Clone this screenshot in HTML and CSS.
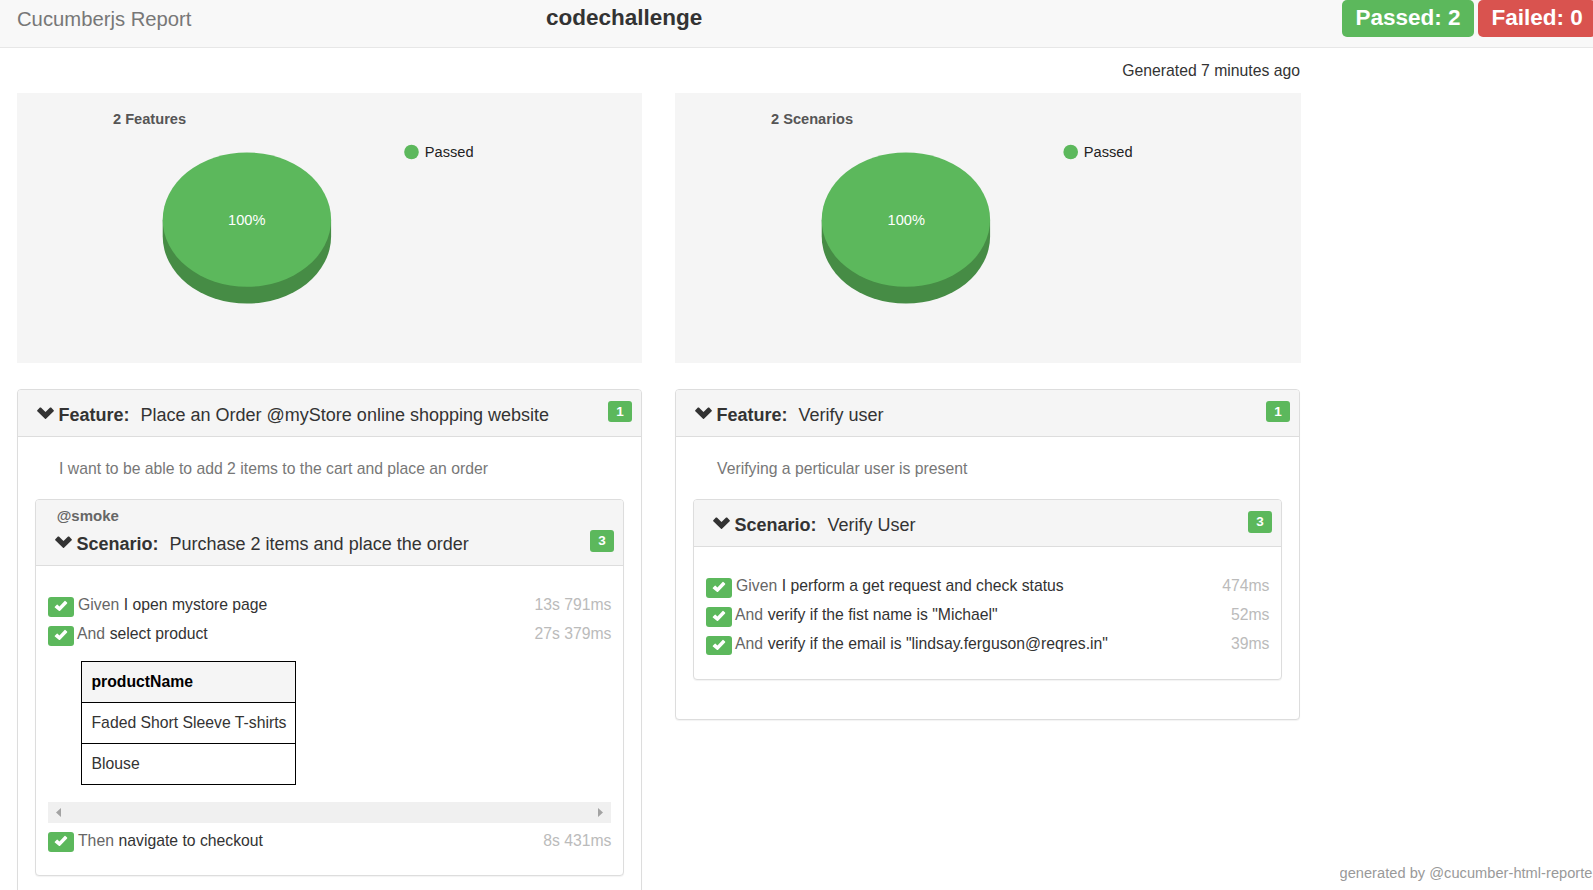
FILE: index.html
```html
<!DOCTYPE html>
<html lang="en">
<head>
<meta charset="utf-8">
<title>Cucumberjs Report</title>
<link rel="stylesheet" href="styles.css">
</head>
<body>
<svg class="defs" aria-hidden="true">
  <symbol id="chevron" viewBox="0 0 17 12"><path d="M.3 3.300 2.900.6Q3.400.2 3.900.6L8.500 5 13.100.6Q13.600.2 14.100.6L16.700 3.300Q17.100 3.800 16.700 4.200L9 11.700Q8.500 12.100 8 11.700L.3 4.200Q-.1 3.800.3 3.300Z" fill="#333"/></symbol>
  <symbol id="check" viewBox="0 0 14 12"><path d="M.8 6.700 2.800 4.700Q3.200 4.400 3.600 4.700L5.400 6.500 10.600.9Q11 .6 11.400.9L13.100 2.600Q13.400 3 13.100 3.400L5.900 10.900Q5.500 11.300 5.100 10.900L.8 7.500Q.5 7.100.8 6.700Z" fill="#fff"/></symbol>
</svg>
<header class="navbar">
  <div class="brand">Cucumberjs Report</div>
  <div class="project">codechallenge</div>
  <div class="totals"><span class="total passed">Passed: 2</span><span class="total failed">Failed: 0</span></div>
</header>
<main class="container">
  <div class="generated">Generated 7 minutes ago</div>
  <div class="columns">
    <section class="column">
      <svg class="chart" viewBox="0 0 625 270">
        <text class="chart-title" x="96" y="31">2 Features</text>
        <path d="M145.700 127v16.400a84.200 67.200 0 0 0 168.400 0V127z" fill="#468c45"/>
        <ellipse cx="229.900" cy="126.600" rx="84.200" ry="67.200" fill="#5cb85c"/>
        <text class="chart-value" x="229.700" y="132">100%</text>
        <circle cx="394.500" cy="59" r="7.300" fill="#5cb85c"/>
        <text class="chart-legend" x="407.800" y="64">Passed</text>
      </svg>
      <article class="card feature">
        <div class="head"><svg class="chevron"><use href="#chevron"/></svg><b>Feature:</b><span class="name">Place an Order @myStore online shopping website</span><span class="count">1</span></div>
        <p class="description">I want to be able to add 2 items to the cart and place an order</p>
        <div class="card scenario">
          <div class="tag">@smoke</div>
          <div class="head tagged"><svg class="chevron"><use href="#chevron"/></svg><b>Scenario:</b><span class="name">Purchase 2 items and place the order</span><span class="count tall">3</span></div>
          <div class="steps">
            <div class="step"><span class="status"><svg><use href="#check"/></svg></span><span class="keyword first">Given</span><span class="text">I open mystore page</span><span class="duration">13s 791ms</span></div>
            <div class="step"><span class="status"><svg><use href="#check"/></svg></span><span class="keyword">And</span><span class="text">select product</span><span class="duration">27s 379ms</span></div>
            <table class="data">
              <tr><th>productName</th></tr>
              <tr><td>Faded Short Sleeve T-shirts</td></tr>
              <tr><td>Blouse</td></tr>
            </table>
            <div class="scrollbar"><svg viewBox="0 0 5 9"><path d="M5 0v9L0 4.500z"/></svg><svg viewBox="0 0 5 9"><path d="M0 0v9l5-4.500z"/></svg></div>
            <div class="step last"><span class="status"><svg><use href="#check"/></svg></span><span class="keyword first">Then</span><span class="text">navigate to checkout</span><span class="duration">8s 431ms</span></div>
          </div>
        </div>
      </article>
    </section>
    <section class="column">
      <svg class="chart wide" viewBox="0 0 626 270">
        <text class="chart-title" x="96" y="31">2 Scenarios</text>
        <path d="M146.700 127v16.400a84.200 67.200 0 0 0 168.400 0V127z" fill="#468c45"/>
        <ellipse cx="230.900" cy="126.600" rx="84.200" ry="67.200" fill="#5cb85c"/>
        <text class="chart-value" x="231.200" y="132">100%</text>
        <circle cx="395.700" cy="59" r="7.300" fill="#5cb85c"/>
        <text class="chart-legend" x="408.800" y="64">Passed</text>
      </svg>
      <article class="card feature">
        <div class="head"><svg class="chevron"><use href="#chevron"/></svg><b>Feature:</b><span class="name">Verify user</span><span class="count">1</span></div>
        <p class="description">Verifying a perticular user is present</p>
        <div class="card scenario">
          <div class="head"><svg class="chevron"><use href="#chevron"/></svg><b>Scenario:</b><span class="name">Verify User</span><span class="count tall">3</span></div>
          <div class="steps roomy">
            <div class="step"><span class="status"><svg><use href="#check"/></svg></span><span class="keyword first">Given</span><span class="text">I perform a get request and check status</span><span class="duration">474ms</span></div>
            <div class="step"><span class="status"><svg><use href="#check"/></svg></span><span class="keyword">And</span><span class="text">verify if the fist name is "Michael"</span><span class="duration">52ms</span></div>
            <div class="step"><span class="status short"><svg><use href="#check"/></svg></span><span class="keyword">And</span><span class="text">verify if the email is "lindsay.ferguson@reqres.in"</span><span class="duration">39ms</span></div>
          </div>
        </div>
      </article>
    </section>
  </div>
</main>
<footer class="credit">generated by @cucumber-html-reporter</footer>
</body>
</html>
```
FILE: styles.css
```css
* { box-sizing: border-box; }
html, body { height: 890px; overflow: hidden; }
body { margin: 0; background: #fff; color: #333; font: 15.75px "Liberation Sans", Arial, sans-serif; }
svg { display: block; flex: none; }
.defs { position: absolute; width: 0; height: 0; }

.navbar { display: flex; align-items: flex-start; height: 48px; padding-left: 17px; background: #f8f8f8; border-bottom: 1px solid #e7e7e7; overflow: hidden; white-space: nowrap; }
.brand { flex: none; width: 529px; font-size: 20.25px; line-height: 38px; color: #777; }
.project { flex: none; width: 796px; font-size: 22.5px; line-height: 35px; font-weight: bold; }
.totals { display: flex; flex: none; gap: 4px; }
.total { flex: none; height: 37px; padding: 0 13.5px; border-radius: 5px; color: #fff; font-size: 22.5px; line-height: 35px; font-weight: bold; }
.passed { width: 132px; background: #5cb85c; }
.failed { background: #d9534f; }

.container { width: 1301px; height: 842px; padding-left: 17px; overflow: hidden; }
.generated { height: 45px; padding-right: 1px; line-height: 45px; text-align: right; }
.columns { display: grid; grid-template-columns: 625px 625px; gap: 33px; align-items: start; }
.chart { width: 625px; height: 270px; background: #f5f5f5; font-size: 14.625px; }
.chart.wide { width: 626px; }
.chart-title { font-weight: bold; fill: #555; }
.chart-value { fill: #fff; text-anchor: middle; }
.chart-legend { fill: #222; }

.card { border: 1px solid #ddd; border-radius: 4px; background: #fff; box-shadow: 0 1px 1px rgba(0, 0, 0, .05); overflow: hidden; }
.feature { margin-top: 26px; padding-bottom: 39px; }
.scenario { margin: 0 17px; }
.head { display: flex; align-items: flex-start; height: 47px; padding: 0 9px 0 19px; border-bottom: 1px solid #ddd; background: #f5f5f5; font-size: 18px; line-height: 50px; white-space: nowrap; }
.chevron { width: 17px; height: 12px; margin: 17px 4.500px 0 0; }
.name { margin-left: 11px; }
.count { width: 24px; height: 21px; margin: 11px 0 0 auto; border-radius: 3px; background: #5cb85c; color: #fff; font-size: 13.5px; line-height: 21px; font-weight: bold; text-align: center; }
.count.tall { height: 22px; }
.tag { height: 31px; padding-left: 20.7px; background: #f5f5f5; color: #666; font-size: 15px; line-height: 31px; font-weight: bold; }
.head.tagged { height: 35px; line-height: 26px; }
.tagged .chevron { margin-top: 5px; }
.tagged .count { margin-top: -1px; line-height: 21px; }
.description { height: 62px; margin: 0; padding: 1px 0 0 41px; color: #777; line-height: 61px; }

.steps { padding: 24px 12px 20px; }
.steps.roomy { padding-bottom: 21px; }
.step { display: flex; align-items: flex-start; height: 29px; line-height: 29px; white-space: nowrap; }
.status { width: 26px; height: 20px; margin: 7px 3px 0 0; padding: 3px 0 0 6px; border-radius: 3px; background: #5cb85c; }
.status.short { height: 19px; }
.status svg { width: 14px; height: 12px; }
.keyword { margin-right: 4.6px; color: #666; }
.keyword.first { margin-left: 1px; }
.duration { margin-left: auto; margin-right: -.5px; color: #bbb; }
.last { margin-top: 3px; }
.last .status { margin-top: 6px; }
.data { width: 215px; margin: 13px 0 17px 33px; border-collapse: collapse; }
.data th, .data td { height: 41px; padding: 0 0 0 9.5px; border: 1px solid #000; text-align: left; white-space: nowrap; line-height: 40px; }
.data th { background: #f5f5f5; color: #000; }
.scrollbar { display: flex; align-items: center; justify-content: space-between; height: 21px; padding: 0 8px; background: #f0f0f0; }
.scrollbar svg { width: 5px; height: 9px; fill: #a3a3a3; }

.credit { position: absolute; left: 1339.5px; top: 862px; width: 253.5px; overflow: hidden; color: #999; font-size: 14.625px; line-height: 22px; letter-spacing: .03px; white-space: nowrap; }
```
